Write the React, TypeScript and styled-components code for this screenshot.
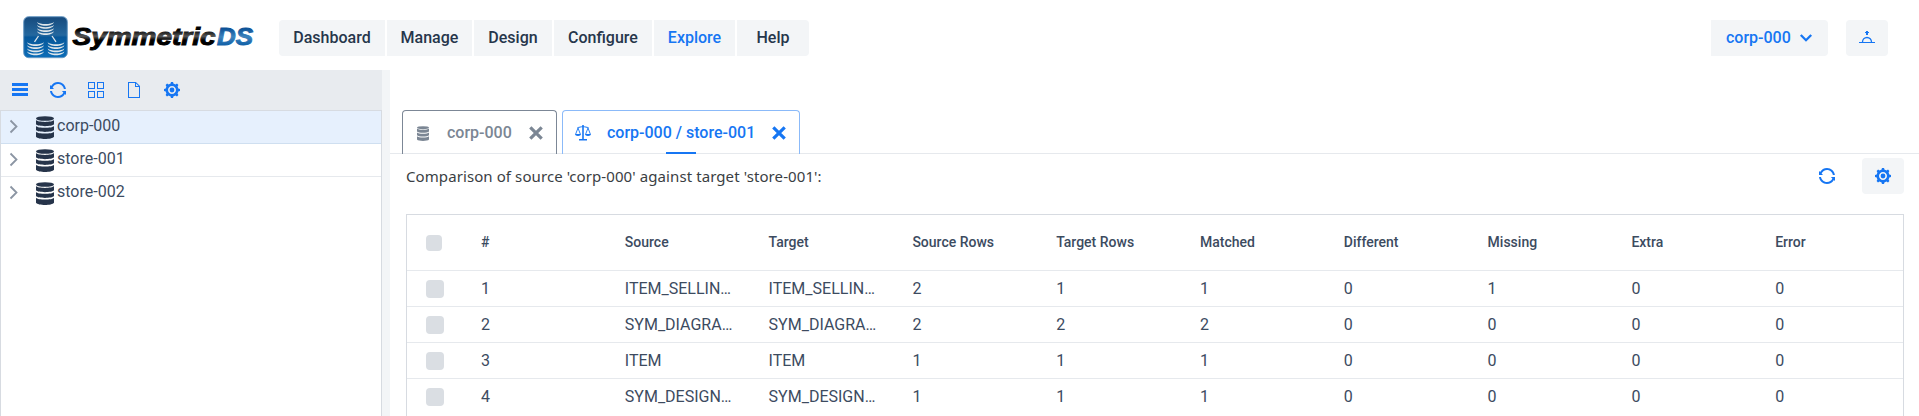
import React from "react";
import styled, { createGlobalStyle } from "styled-components";

const blue = "#1676f3";

const GlobalStyle = createGlobalStyle`
  * { box-sizing: border-box; }
  body {
    margin: 0;
    background: #fff;
    color: #3c4b5f;
    font: 400 16px/26px Roboto, "Liberation Sans", sans-serif;
    overflow: hidden;
  }
  button { font: inherit; border: 0; padding: 0; background: none; color: inherit; cursor: pointer; }
`;

const Page = styled.div`
  display: flex;
  flex-direction: column;
  height: 416px;
  overflow: hidden;
`;

const Header = styled.header`
  display: flex;
  align-items: flex-start;
  flex: none;
  height: 70px;
  padding: 16px 31px 0 23px;
`;

const Brand = styled.div`
  width: 256px;
  height: 44px;
  svg { display: block; }
`;

const Nav = styled.nav`
  display: flex;
  gap: 2px;
  margin-top: 4px;
  border-radius: 4px;
  overflow: hidden;
`;

const NavItem = styled.button<{ $width: number; $active?: boolean }>`
  width: ${(p) => p.$width}px;
  height: 36px;
  background: #f3f5f7;
  color: ${(p) => (p.$active ? blue : "#26364b")};
  font-weight: 500;
  line-height: 34px;
`;

const HeaderActions = styled.div`
  display: flex;
  gap: 18px;
  margin: 4px 0 0 auto;
`;

const NodeSelect = styled.button`
  display: flex;
  align-items: center;
  justify-content: space-between;
  width: 117px;
  height: 36px;
  padding: 0 15px 0 15px;
  border-radius: 0 4px 4px 0;
  background: #f3f5f7;
  color: ${blue};
  font-weight: 500;
`;

const IconButton = styled.button<{ $filled?: boolean }>`
  display: flex;
  align-items: center;
  justify-content: center;
  width: 42px;
  height: 36px;
  border-radius: 4px;
  background: ${(p) => (p.$filled ? "#f3f5f7" : "transparent")};
  color: ${blue};
`;

const Body = styled.div`
  display: flex;
  flex: 1;
  min-height: 0;
`;

const Sidebar = styled.aside`
  display: flex;
  flex-direction: column;
  width: 382px;
`;

const Toolbar = styled.div`
  display: flex;
  align-items: center;
  gap: 22px;
  height: 40px;
  padding-left: 12px;
  background: #e8ebef;
  color: ${blue};
`;

const Tree = styled.div`
  flex: 1;
  border: 1px solid #d7dbe1;
  border-bottom: 0;
`;

const TreeRow = styled.div<{ $selected?: boolean }>`
  display: flex;
  align-items: center;
  height: 33px;
  padding-left: 8px;
  border-bottom: 1px solid ${(p) => (p.$selected ? "#cfdff0" : "#e6e9ed")};
  background: ${(p) => (p.$selected ? "#e6f0fd" : "#fff")};
  &:last-child { border-bottom-color: transparent; }
`;

const TreeLabel = styled.span`
  margin: -3px 0 0 3px;
`;

const TreeChevron = styled.svg`
  margin-right: 15px;
`;

const Splitter = styled.div`
  width: 8px;
  background: #f3f5f7;
`;

const Main = styled.main`
  display: flex;
  flex-direction: column;
  flex: 1;
  min-width: 0;
  padding-top: 40px;
`;

const Tabs = styled.div`
  display: flex;
  gap: 5px;
  height: 44px;
  padding-left: 12px;
  border-bottom: 1px solid #e6e9ed;
`;

const Tab = styled.div<{ $width: number; $active?: boolean }>`
  position: relative;
  display: flex;
  align-items: center;
  width: ${(p) => p.$width}px;
  height: 44px;
  padding: 1px 13px 0 12px;
  border: 1px solid ${(p) => (p.$active ? "#8bbaf9" : "#7c8796")};
  border-bottom: 0;
  border-radius: 4px 4px 0 0;
  color: ${(p) => (p.$active ? blue : "#7b8694")};
  font-weight: 500;
  &::after {
    content: "";
    display: ${(p) => (p.$active ? "block" : "none")};
    position: absolute;
    left: 103px;
    bottom: 0;
    width: 30px;
    height: 2px;
    background: ${blue};
  }
`;

const TabLabel = styled.span`
  margin: -1px auto 0 16px;
`;

const Summary = styled.div`
  display: flex;
  align-items: flex-start;
  height: 60px;
  padding: 4px 15px 0 16px;
`;

const SummaryText = styled.p`
  flex: 1;
  margin: 5px 0 0;
  color: #3a3e43;
  font: 400 15px/26px "Noto Sans", "Open Sans", sans-serif;
  letter-spacing: 0.09px;
`;

const SummaryActions = styled.div`
  display: flex;
  gap: 14px;
`;

const Table = styled.div`
  flex: 1;
  margin: 0 15px 0 16px;
  border: 1px solid #d7dbe1;
  border-bottom: 0;
  overflow: hidden;
`;

const Row = styled.div<{ $head?: boolean }>`
  display: grid;
  grid-template-columns: 58px repeat(10, 1fr);
  align-items: center;
  height: ${(p) => (p.$head ? 56 : 36)}px;
  border-bottom: 1px solid #e6e9ed;
  font-size: ${(p) => (p.$head ? 14 : 16)}px;
  font-weight: ${(p) => (p.$head ? 500 : 400)};
  &:last-child { border-bottom-color: transparent; }
`;

const Cell = styled.div<{ $head?: boolean }>`
  padding: 0 16px ${(p) => (p.$head ? 2 : 0)}px;
  overflow: hidden;
  white-space: nowrap;
  text-overflow: ellipsis;
`;

const Checkbox = styled.span<{ $size: number }>`
  display: block;
  width: ${(p) => p.$size}px;
  height: ${(p) => p.$size}px;
  margin-left: 19px;
  border-radius: 4px;
  background: #dadee3;
`;

const Glyph = ({ size = 16, children }: { size?: number; children: React.ReactNode }) => (
  <svg width={size} height={size} viewBox="0 0 16 16" fill="currentColor">{children}</svg>
);

const MenuIcon = () => <Glyph><path d="M0 1h16v3H0zM0 6h16v3H0zM0 11h16v3H0z" /></Glyph>;
const RefreshIcon = () => (
  <Glyph>
    <path d="M2.6 5.6C3.5 3.5 5.6 2 8 2c3 0 5.4 2.2 5.9 5h2C15.4 3.1 12.1 0 8 0 5 0 2.4 1.6 1.1 4.1L0 3v4h4L2.6 5.6z" />
    <path d="M16 9h-4.1l1.5 1.4C12.5 12.5 10.4 14 7.9 14 5 14 2.5 11.8 2 9H0c.5 3.9 3.9 7 7.9 7 3 0 5.6-1.7 7-4.1L16 13V9z" />
  </Glyph>
);
const GridIcon = () => (
  <Glyph>
    <g fill="none" stroke="currentColor">
      <rect x=".5" y=".5" width="6" height="6" /><rect x="9.5" y=".5" width="6" height="6" />
      <rect x=".5" y="9.5" width="6" height="6" /><rect x="9.5" y="9.5" width="6" height="6" />
    </g>
  </Glyph>
);
const FileIcon = () => <Glyph><path fillRule="evenodd" d="M9.9 0H2v16h12V4.1L9.9 0zM10 1.4 12.6 4H10V1.4zM3 15V1h6v4h4v10H3z" /></Glyph>;
const CogIcon = () => (
  <Glyph>
    <path fillRule="evenodd" d="M16 9V7l-1.7-.6c-.2-.6-.4-1.2-.7-1.8l.8-1.6L13 1.6l-1.6.8c-.5-.3-1.1-.6-1.8-.7L9 0H7l-.6 1.7c-.6.2-1.2.4-1.7.7l-1.6-.8-1.5 1.5.8 1.6c-.3.5-.5 1.1-.7 1.7L0 7v2l1.7.6c.2.6.4 1.2.7 1.8L1.6 13 3 14.4l1.6-.8c.5.3 1.1.6 1.8.7L7 16h2l.6-1.7c.6-.2 1.2-.4 1.8-.7l1.6.8 1.4-1.4-.8-1.6c.3-.5.6-1.1.7-1.8L16 9zM8 12c-2.2 0-4-1.8-4-4s1.8-4 4-4 4 1.8 4 4-1.8 4-4 4z" />
    <circle cx="8" cy="8" r="2.4" />
  </Glyph>
);
const DatabaseIcon = ({ width = 18, height = 23 }: { width?: number; height?: number }) => (
  <svg width={width} height={height} viewBox="0 0 18 23" preserveAspectRatio="none" fill="currentColor">
    <ellipse cx="9" cy="2.5" rx="9" ry="2.3" />
    <path d="M0 4c2 2.5 16 2.5 18 0v4.3c-2 2.5-16 2.5-18 0z" />
    <path d="M0 9.9c2 2.5 16 2.5 18 0v4.2c-2 2.5-16 2.5-18 0z" />
    <path d="M0 15.7c2 2.5 16 2.5 18 0v5c-2 3-16 3-18 0z" />
  </svg>
);
const TreeDatabase = styled.span`
  display: flex;
  color: #26344a;
`;
const TabDatabase = styled.span`
  display: flex;
  width: 16px;
  padding-left: 2px;
`;
const ScaleIcon = () => (
  <Glyph>
    <path d="M7.2 0h1.6v14H12v1.5H4V14h3.2z" />
    <path d="M2.5 2.5c2 0 3-.8 5.5-.8s3.5.8 5.5.8" fill="none" stroke="currentColor" />
    <path d="M3 3 .7 9M3 3l2.3 6M13 3l-2.3 6M13 3l2.3 6" fill="none" stroke="currentColor" strokeWidth=".9" />
    <path d="M0 9h6c0 1.3-1.3 2-3 2s-3-.7-3-2zM10 9h6c0 1.3-1.3 2-3 2s-3-.7-3-2z" />
  </Glyph>
);
const CloseIcon = () => (
  <svg width="14" height="14" viewBox="0 0 14 14"><path d="m1.3 1.3 11.4 11.4M12.7 1.3 1.3 12.7" stroke="currentColor" strokeWidth="3.2" /></svg>
);
const SunIcon = () => (
  <Glyph>
    <path d="M0 12h16v1H0zM7 3h2v2H7zM6 2h4v1H6zM7 1h2v1H7z" />
    <path d="M3.5 12a4.5 4.5 0 0 1 9 0" fill="none" stroke="currentColor" strokeWidth="1.3" />
  </Glyph>
);

const stacks = [{ x: 22.5, y: 6 }, { x: 12.5, y: 26.2 }, { x: 33, y: 26.2 }];

const Logo = () => (
  <svg width="232" height="44" viewBox="0 0 232 44">
    <defs>
      <linearGradient id="tile" x2="0" y2="1"><stop stopColor="#174a7c" /><stop offset=".45" stopColor="#24689f" /><stop offset=".5" stopColor="#075799" /><stop offset="1" stopColor="#0b6db8" /></linearGradient>
      <linearGradient id="ink" x2="0" y2="1"><stop offset=".25" stopColor="#000" /><stop offset=".48" stopColor="#555" /><stop offset=".62" stopColor="#000" /></linearGradient>
      <linearGradient id="azure" x2="0" y2="1"><stop offset=".2" stopColor="#0c5297" /><stop offset=".5" stopColor="#3c83bd" /><stop offset=".85" stopColor="#0a5ba4" /></linearGradient>
    </defs>
    <rect x=".7" y=".7" width="43.6" height="41" rx="5" fill="url(#tile)" stroke="#6b9ac4" />
    <g fill="#dfe6ea">
      {stacks.map(({ x, y }) =>
        [0, 3.1, 6.2, 9.3].map((d) => (
          <path key={`${x}-${d}`} d={`M${x - 8.3} ${y + d}c2.5 2.7 14.1 2.7 16.6 0c-1 5-15.6 5-16.6 0z`} />
        ))
      )}
      <path d="m15.5 20-4 5.8M29 20l4 5.8" stroke="#dfe6ea" strokeWidth="1.3" />
    </g>
    <g fontFamily="Liberation Sans, Arial, sans-serif" fontSize="24.5" fontWeight="700" fontStyle="italic">
      <text x="49.5" y="29.3" textLength="143" lengthAdjust="spacingAndGlyphs" fill="url(#ink)" stroke="url(#ink)" strokeWidth="1">Symmetric</text>
      <text x="194" y="29.3" textLength="36" lengthAdjust="spacingAndGlyphs" fill="url(#azure)" stroke="url(#azure)" strokeWidth="1">DS</text>
    </g>
  </svg>
);

const navItems: [string, number][] = [["Dashboard", 106], ["Manage", 85], ["Design", 78], ["Configure", 98], ["Explore", 81], ["Help", 72]];
const nodes = ["corp-000", "store-001", "store-002"];
const columns = ["#", "Source", "Target", "Source Rows", "Target Rows", "Matched", "Different", "Missing", "Extra", "Error"];
const rows = [
  ["1", "ITEM_SELLIN…", "ITEM_SELLIN…", "2", "1", "1", "0", "1", "0", "0"],
  ["2", "SYM_DIAGRA…", "SYM_DIAGRA…", "2", "2", "2", "0", "0", "0", "0"],
  ["3", "ITEM", "ITEM", "1", "1", "1", "0", "0", "0", "0"],
  ["4", "SYM_DESIGN…", "SYM_DESIGN…", "1", "1", "1", "0", "0", "0", "0"],
];

export default function App() {
  return (
    <Page>
      <GlobalStyle />
      <Header>
        <Brand><Logo /></Brand>
        <Nav>
          {navItems.map(([label, width]) => (
            <NavItem key={label} $width={width} $active={label === "Explore"}>{label}</NavItem>
          ))}
        </Nav>
        <HeaderActions>
          <NodeSelect>
            corp-000
            <svg width="14" height="10" viewBox="0 0 14 10"><path d="m1.8 2 5.2 5.2L12.2 2" fill="none" stroke="currentColor" strokeWidth="2.3" /></svg>
          </NodeSelect>
          <IconButton $filled><SunIcon /></IconButton>
        </HeaderActions>
      </Header>
      <Body>
        <Sidebar>
          <Toolbar><MenuIcon /><RefreshIcon /><GridIcon /><FileIcon /><CogIcon /></Toolbar>
          <Tree>
            {nodes.map((name, i) => (
              <TreeRow key={name} $selected={i === 0}>
                <TreeChevron width="12" height="16" viewBox="0 0 12 16"><path d="m1.5 1.5 6 6-6 6" fill="none" stroke="#8b95a3" strokeWidth="1.8" /></TreeChevron>
                <TreeDatabase><DatabaseIcon /></TreeDatabase>
                <TreeLabel>{name}</TreeLabel>
              </TreeRow>
            ))}
          </Tree>
        </Sidebar>
        <Splitter />
        <Main>
          <Tabs>
            <Tab $width={155}>
              <TabDatabase><DatabaseIcon width={12} height={15} /></TabDatabase>
              <TabLabel>corp-000</TabLabel>
              <CloseIcon />
            </Tab>
            <Tab $width={238} $active>
              <ScaleIcon />
              <TabLabel>corp-000 / store-001</TabLabel>
              <CloseIcon />
            </Tab>
          </Tabs>
          <Summary>
            <SummaryText>Comparison of source 'corp-000' against target 'store-001':</SummaryText>
            <SummaryActions>
              <IconButton><RefreshIcon /></IconButton>
              <IconButton $filled><CogIcon /></IconButton>
            </SummaryActions>
          </Summary>
          <Table>
            <Row $head>
              <Checkbox $size={16} />
              {columns.map((name) => <Cell key={name} $head>{name}</Cell>)}
            </Row>
            {rows.map((row) => (
              <Row key={row[0]}>
                <Checkbox $size={18} />
                {row.map((value, i) => <Cell key={i}>{value}</Cell>)}
              </Row>
            ))}
          </Table>
        </Main>
      </Body>
    </Page>
  );
}
